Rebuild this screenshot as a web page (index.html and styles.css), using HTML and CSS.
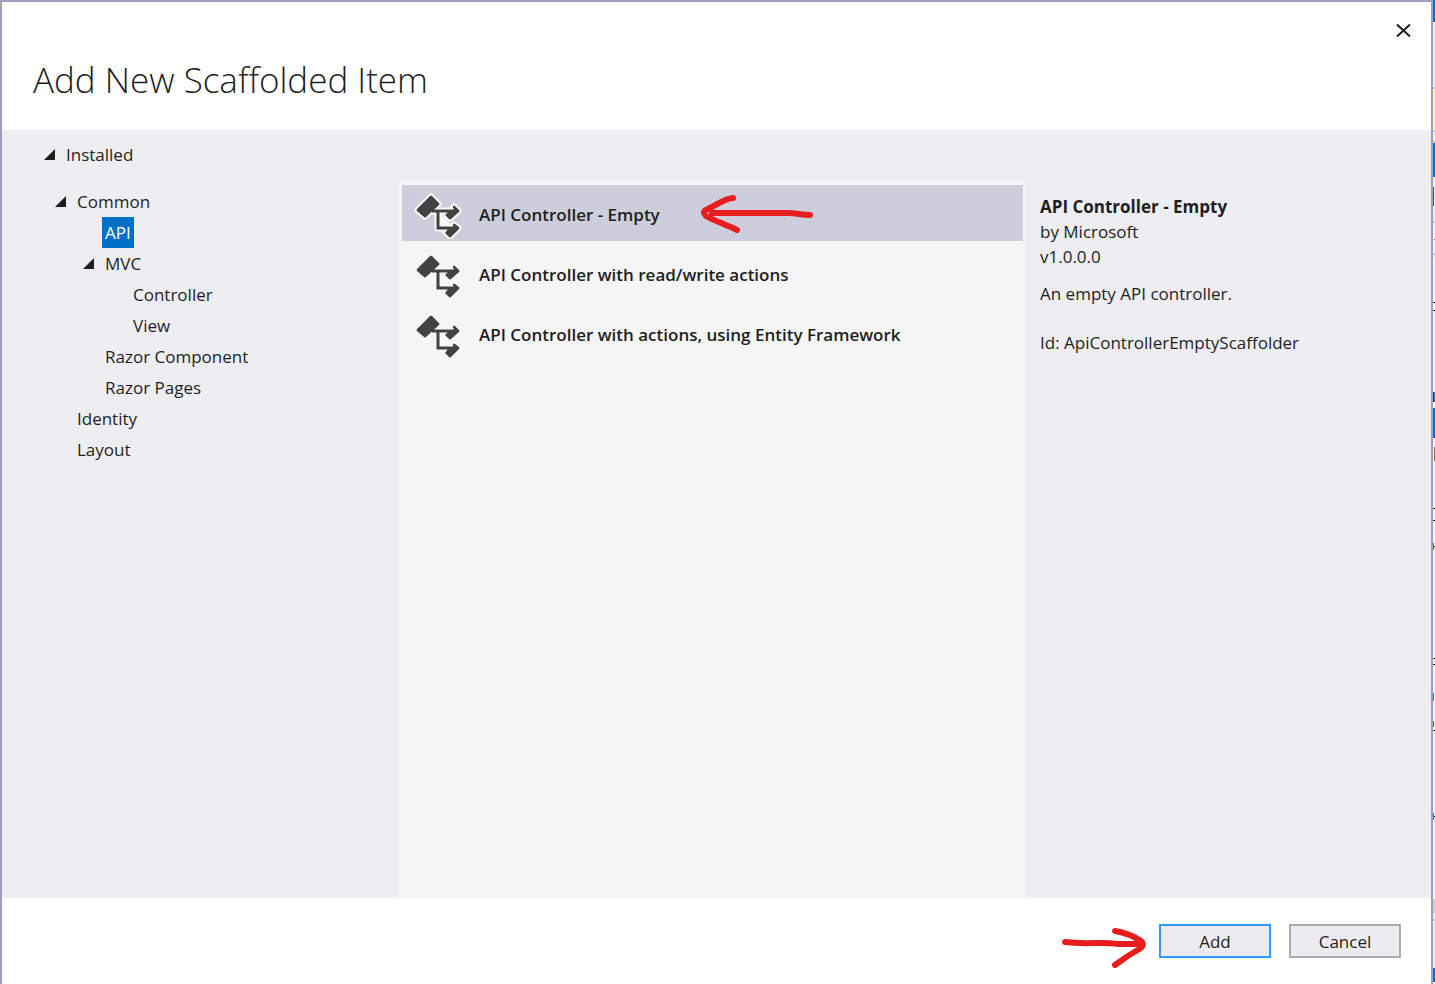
FILE: index.html
```html
<!DOCTYPE html>
<html lang="en">
<head>
<meta charset="utf-8">
<meta name="viewport" content="width=device-width, initial-scale=1">
<title>Add New Scaffolded Item</title>
<link rel="stylesheet" href="styles.css">
</head>
<body>
<svg class="defs" aria-hidden="true">
  <symbol id="controller" viewBox="0 -2 50 50">
    <g class="glyph-halo">
      <path d="M6 19 19 6l7 7-13 12zM20 20h22M26 20v17h16"/>
      <path d="m42 16 4 4-8 7-3-3zM42 34l4 3-8 8-4-4z"/>
    </g>
    <path d="M5 20q-1-1 0-2L18 5q1-1 2 0l7 7q1 1 0 2L14 26q-1 1-2 0z"/>
    <path d="M20 20h23M26 20v17h16" fill="none" stroke="#424242" stroke-width="3"/>
    <path d="m41 15q1-1 2 0l4 4q1 1 0 2l-8 7q-1 1-2 0l-4-4 3-3h4l2-3-1-1zM41 33q1-1 2 0l4 3q1 1 0 2l-8 8q-1 1-2 0l-4-4 3-4h4l2-2-1-1z"/>
  </symbol>
  <symbol id="expanded" viewBox="0 0 12 12"><path d="M11 0v11H0z" fill="#1e1e1e"/></symbol>
</svg>
<div class="screen">
  <main class="dialog" role="dialog" aria-labelledby="title">
    <header class="header">
      <h1 class="title" id="title">Add New Scaffolded Item</h1>
      <button class="close" aria-label="Close"><svg width="15" height="13" viewBox="0 0 15 13"><path d="m1 .5 13 12M14 .5l-13 12" stroke="#1e1e1e" stroke-width="2"/></svg></button>
    </header>
    <div class="content">
      <nav class="tree" aria-label="Categories">
        <button class="node root"><svg class="arrow"><use href="#expanded"/></svg><span class="label">Installed</span></button>
        <ul class="branch">
          <li><button class="node"><svg class="arrow"><use href="#expanded"/></svg><span class="label">Common</span></button>
            <ul class="branch nested">
              <li><button class="node leaf"><span class="label selected">API</span></button></li>
              <li><button class="node"><svg class="arrow"><use href="#expanded"/></svg><span class="label">MVC</span></button>
                <ul class="branch nested">
                  <li><button class="node leaf"><span class="label">Controller</span></button></li>
                  <li><button class="node leaf"><span class="label">View</span></button></li>
                </ul>
              </li>
              <li><button class="node leaf"><span class="label">Razor Component</span></button></li>
              <li><button class="node leaf"><span class="label">Razor Pages</span></button></li>
            </ul>
          </li>
          <li><button class="node leaf"><span class="label">Identity</span></button></li>
          <li><button class="node leaf"><span class="label">Layout</span></button></li>
        </ul>
      </nav>
      <section class="templates" aria-label="Templates">
        <button class="template active">
          <svg class="glyph"><use href="#controller"/></svg>
          <span>API Controller - Empty</span>
          <svg class="pointer" width="116" height="42" viewBox="0 0 116 42"><path d="M110 22c-10 0-12-2-22-2H12M33 5C23 6 17 12 6 17q-4 2 0 6c7 4 18 8 31 14" class="ink"/></svg>
        </button>
        <button class="template">
          <svg class="glyph"><use href="#controller"/></svg>
          <span>API Controller with read/write actions</span>
        </button>
        <button class="template">
          <svg class="glyph"><use href="#controller"/></svg>
          <span>API Controller with actions, using Entity Framework</span>
        </button>
      </section>
      <aside class="details">
        <h2 class="name">API Controller - Empty</h2>
        <p>by Microsoft</p>
        <p>v1.0.0.0</p>
        <p class="description">An empty API controller.</p>
        <p class="identifier">Id: ApiControllerEmptyScaffolder</p>
      </aside>
    </div>
    <footer class="footer">
      <svg width="86" height="54" viewBox="0 0 86 54"><path d="M4 28c24 3 35-1 53 2h22M54 17c12 2 20 6 26 10q4 3 0 7C71 39 62 45 54 51" class="ink"/></svg>
      <button class="action primary">Add</button>
      <button class="action">Cancel</button>
    </footer>
  </main>
  <svg class="backdrop" viewBox="0 0 2 984" preserveAspectRatio="xMidYMin slice" shape-rendering="crispEdges" aria-hidden="true">
    <path d="M0 0h2v984H0z" fill="#eeeef2"/>
    <path d="M0 0h2v22H0zM0 143h2v34H0zM0 968h2v14H0z" fill="#0070c6"/>
    <path d="M0 89h2v41H0z" fill="#fffb9c"/>
    <path d="M0 223h2v30H0zM0 258h2v642H0z" fill="#f6f6f6"/>
    <path d="M0 408h2v30H0z" fill="#0070c6"/>
    <path d="M0 87h2v2H0zM0 130h2v2H0zM0 141h2v2H0zM0 221h2v2H0zM0 253h2v2H0zM0 899h2v14H0zM0 919h2v2H0z" fill="#c9cad8"/>
    <path d="M0 187h1v19H0z" fill="#555"/>
    <path d="M1 239h1v1H1zM1 447h1v14H1z" fill="#a85b16"/>
    <path d="M0 302h2v1H0zM0 310h2v1H0zM0 508h2v1H0zM0 520h2v1H0zM0 546h2v1H0zM0 658h2v1H0zM0 664h2v1H0zM0 730h2v1H0zM0 816h2v1H0z" fill="#222"/>
    <path d="M0 392h1v10H0z" fill="#642430"/>
    <path d="M1 392h1v10H1zM0 543h1v7H0zM0 693h1v8H0zM0 721h1v6H0zM0 813h1v7H0z" fill="#2d78c0"/>
  </svg>
</div>
</body>
</html>
```
FILE: styles.css
```css
* { box-sizing: border-box; }
body {
  margin: 0;
  background: #fff;
  color: #1e1e1e;
  font: 17px/25px "Segoe UI", "Open Sans", sans-serif;
}
button { font: inherit; color: inherit; border: 0; background: none; padding: 0; text-align: left; }
h1, h2, p, ul { margin: 0; padding: 0; }
ul { list-style: none; }
.defs { position: absolute; width: 0; height: 0; }
.screen { display: flex; min-height: 100vh; }
.dialog {
  flex: 1;
  display: flex;
  flex-direction: column;
  border: 2px solid #9f9fbd;
  border-bottom: 0;
}
.backdrop { width: 2px; height: 100vh; }
.header { display: flex; justify-content: space-between; align-items: flex-start; padding: 22px 20px 24px 31px; }
.title { padding-top: 30px; font-size: 35px; line-height: 52px; font-weight: 300; }
.close { display: flex; }
.content {
  flex: 1;
  display: grid;
  grid-template-columns: 396px minmax(0, 1fr) 405px;
  background: #eeeef2;
}
.tree { padding: 9px 42px; }
.node { display: flex; align-items: center; height: 31px; }
.root { margin-bottom: 16px; }
.arrow { width: 12px; height: 12px; margin-right: 7px; }
.label { padding: 3px; }
.branch { padding-left: 11px; }
.nested { padding-left: 28px; }
.leaf { padding-left: 19px; }
.selected { background: #0070c6; color: #fff; }
.templates {
  display: flex;
  flex-direction: column;
  gap: 4px;
  margin-top: 51px;
  padding: 4px 3px 4px 4px;
  background: #f5f5f5;
}
.template { position: relative; display: flex; align-items: center; gap: 17px; height: 56px; padding: 8px 10px 6px; font-weight: 600; }
.active { background: #cccedb; }
.glyph { width: 50px; height: 50px; fill: #424242; }
.glyph-halo { fill: #f8f8f8; stroke: #f8f8f8; stroke-width: 7; stroke-linejoin: round; }
.pointer { position: absolute; left: 298px; top: 8px; }
.ink { fill: none; stroke: #e81e1e; stroke-width: 6; stroke-linecap: round; stroke-linejoin: round; }
.details { padding: 64px 14px; }
.name { font-size: 17px; line-height: 25px; font-weight: 700; }
.description { margin-top: 12px; }
.identifier { margin-top: 24px; }
.footer { display: flex; justify-content: flex-end; align-items: center; gap: 18px; height: 86px; padding-right: 30px; }
.footer svg { margin-right: -6px; }
.action { width: 112px; height: 34px; border: 2px solid #acacac; background: #ececf0; text-align: center; }
.primary { border-color: #3399ff; }
```
